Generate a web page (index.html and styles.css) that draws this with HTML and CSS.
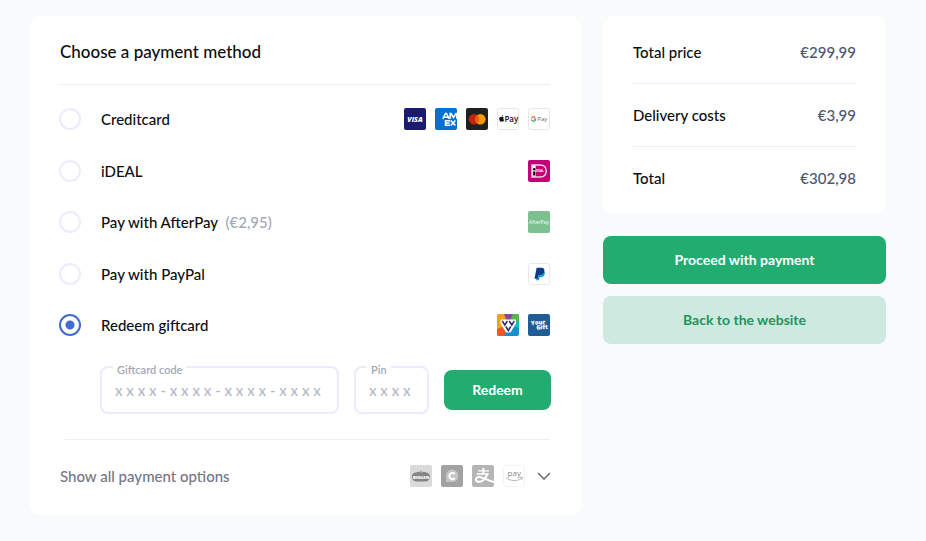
FILE: index.html
```html
<!DOCTYPE html>
<html lang="en">
<head>
<meta charset="utf-8">
<meta name="viewport" content="width=device-width, initial-scale=1">
<title>Choose a payment method</title>
<link rel="stylesheet" href="styles.css">
</head>
<body>
<div class="checkout">
  <main class="card methods">
    <h1 class="title">Choose a payment method</h1>
    <form class="form">
      <div class="options">
        <div class="option">
          <input class="radio" type="radio" name="method" id="creditcard">
          <label class="name" for="creditcard">Creditcard</label>
          <span class="logos">
            <svg class="logo" viewBox="0 0 22 22" role="img" aria-label="Visa"><rect width="22" height="22" rx="2" fill="#1a1a70"/><text x="11" y="13.500" class="t-visa" text-anchor="middle">VISA</text></svg>
            <svg class="logo" viewBox="0 0 22 22" role="img" aria-label="American Express"><rect width="22" height="22" rx="2" fill="#0571cf"/><g fill="none" stroke="#fff" stroke-width="1.500"><path d="M7.800 10.800 10.500 5.500h1l2.700 5.300M9.300 9.200h3.800M15.200 10.800V5.500h.8l2.500 4 2.500-4h.8v5.300"/><path d="M15.200 12.700h-4.700v4.600h4.700M10.500 15h4.200M15.800 12.400l4.600 5M20.400 12.400l-4.600 5"/></g></svg>
            <svg class="logo" viewBox="0 0 22 22" role="img" aria-label="Mastercard"><rect width="22" height="22" rx="2" fill="#20201f"/><circle cx="8" cy="11.200" r="5.200" fill="#c5220f"/><circle cx="14.400" cy="11.200" r="5.200" fill="#f59a0b"/><path d="M11.200 7.100a5.200 5.200 0 0 1 0 8.200 5.200 5.200 0 0 1 0-8.200Z" fill="#ef5a0a"/></svg>
            <svg class="logo" viewBox="0 0 22 22" role="img" aria-label="Apple Pay"><rect x=".5" y=".5" width="21" height="21" rx="2" fill="#fff" stroke="#e6e6e8"/><path d="M4.800 9.200c.9-.5 1.700-.2 2.100.3-.9.7-.8 2 .2 2.500-.4 1.200-1.100 2-1.800 1.600-.4-.2-.7-.2-1.100 0C3.200 14 2.200 12 2.200 10.700c0-1.400 1.300-2 2.600-1.500ZM4.700 8.800c0-.9.5-1.500 1.300-1.700.1.900-.5 1.600-1.300 1.700Z" fill="#111"/><text x="7.400" y="13.600" class="t-apple">Pay</text></svg>
            <svg class="logo" viewBox="0 0 22 22" role="img" aria-label="Google Pay"><rect x=".5" y=".5" width="21" height="21" rx="2" fill="#fff" stroke="#e6e6e8"/><g fill="none" stroke-width="1.200"><path d="M7.200 9.500A2.200 2.200 0 0 0 3.700 9.700" stroke="#ea4335"/><path d="M3.700 9.700a2.200 2.200 0 0 0 0 2.500" stroke="#fbbc04"/><path d="M3.700 12.200A2.200 2.200 0 0 0 6.900 12.700" stroke="#34a853"/><path d="M6.900 12.700A2.200 2.200 0 0 0 7.600 11H5.600" stroke="#4285f4"/></g><text x="9.300" y="13.300" class="t-google">Pay</text></svg>
          </span>
        </div>
        <div class="option">
          <input class="radio" type="radio" name="method" id="ideal">
          <label class="name" for="ideal">iDEAL</label>
          <span class="logos">
            <svg class="logo" viewBox="0 0 22 22" role="img" aria-label="iDEAL"><rect width="22" height="22" rx="2" fill="#c10079"/><path d="M4 5h8c4.300 0 6.200 2.500 6.200 6s-2 6-6.200 6H4Z" fill="#c10079" stroke="#e8dce4" stroke-width="1.400"/><path d="M4.500 5.500h3.200v11H4.500Z" fill="#fff"/><circle cx="6.200" cy="9.300" r="1.200"/><path d="M5.200 11.500h2v4h-2Z"/><path d="M8 7h4c2.800 0 4 1.600 4 4s-1.200 4-4 4H8Z" fill="#c10079"/><text x="8" y="12.100" class="t-ideal">DEAL</text></svg>
          </span>
        </div>
        <div class="option">
          <input class="radio" type="radio" name="method" id="afterpay">
          <label class="name" for="afterpay">Pay with AfterPay <span class="fee">(€2,95)</span></label>
          <span class="logos">
            <svg class="logo" viewBox="0 0 22 22" role="img" aria-label="AfterPay"><rect width="22" height="22" rx="2" fill="#7cc08f"/><text x="11" y="12.800" class="t-after" text-anchor="middle">AfterPay</text></svg>
          </span>
        </div>
        <div class="option">
          <input class="radio" type="radio" name="method" id="paypal">
          <label class="name" for="paypal">Pay with PayPal</label>
          <span class="logos">
            <svg class="logo" viewBox="0 0 22 22" role="img" aria-label="PayPal"><rect x=".5" y=".5" width="21" height="21" rx="2" fill="#fff" stroke="#e9e9eb"/><path d="M9.500 7.500h5c2.200.4 2.800 2 2.200 3.800-.6 2-2 2.900-4.200 2.900h-.9l-.6 3.100H8.200Z" fill="#189bd8"/><path d="M8.600 4.700h4.700c2.500 0 3.500 1.400 3 3.600-.6 2.700-2.200 3.700-4.700 3.700h-1.400l-.7 3.700H6.500Z" fill="#123984"/></svg>
          </span>
        </div>
        <div class="option">
          <input class="radio" type="radio" name="method" id="giftcard" checked>
          <label class="name" for="giftcard">Redeem giftcard</label>
          <span class="logos">
            <svg class="logo" viewBox="0 0 22 22" role="img" aria-label="VVV Giftcard"><defs><clipPath id="vvv"><rect width="22" height="22" rx="2"/></clipPath></defs><g clip-path="url(#vvv)"><path d="M0 0h22v22H0Z" fill="#168fd2"/><path d="M0 0h8l3 11L0 17Z" fill="#f6a116"/><path d="M7 0h10l-6 11Z" fill="#8c469c"/><path d="M16 0h6v7l-11 4Z" fill="#54b746"/><path d="M0 15l11-4-4 11H0Z" fill="#ee5824"/><path d="M22 7v7L11 11Z" fill="#1cb5c4"/></g><path d="M3.500 5.500h15.500v4l-5.500 9h-4.500l-5.500-9Z" fill="#fff"/><g fill="none" stroke="#302a70" stroke-width="1.500"><path d="M5.300 7 7.800 11l2.500-4M12.300 7l2.500 4 2.500-4M8.800 12.500l2.500 4 2.500-4"/></g></svg>
            <svg class="logo" viewBox="0 0 22 22" role="img" aria-label="YourGift"><rect width="22" height="22" rx="2" fill="#205d96"/><text transform="rotate(-5 11 11)" class="t-gift"><tspan x="3" y="10.500">Your</tspan><tspan x="8" y="15.500">Gift</tspan></text></svg>
          </span>
        </div>
      </div>
      <div class="redeem">
        <div class="field field-code">
          <label class="caption" for="code">Giftcard code</label>
          <input class="input" id="code" type="text" placeholder="x x x x - x x x x - x x x x - x x x x">
        </div>
        <div class="field field-pin">
          <label class="caption" for="pin">Pin</label>
          <input class="input" id="pin" type="text" placeholder="x x x x">
        </div>
        <button class="button button-small" type="button">Redeem</button>
      </div>
    </form>
    <button class="more" type="button">
      <span>Show all payment options</span>
      <span class="logos">
        <svg class="logo" viewBox="0 0 22 22" aria-hidden="true"><rect width="22" height="22" rx="2" fill="#dadada"/><path d="M6 7.500c2-1 3.500-.8 4.500.2L10 5.800l1.300.2.300 1.700c1.500-1.200 3-1 4.400-.2 2.200 0 4 1.800 4 4.200s-1.800 4.700-4 4.700H6c-2.400 0-4.200-2.300-4.200-4.700S3.600 7.500 6 7.500Z" fill="#858585"/><text x="11" y="14.300" class="t-small" text-anchor="middle">BENGEN</text></svg>
        <svg class="logo" viewBox="0 0 22 22" aria-hidden="true"><rect width="22" height="22" rx="2" fill="#a2a2a2"/><path d="M5 17V11a6.200 6.200 0 1 1 6.200 6Z" fill="#c6c6c6"/><path d="M13.700 8.900a3.100 3.100 0 1 0 0 4.300" fill="none" stroke="#fff" stroke-width="2"/></svg>
        <svg class="logo" viewBox="0 0 22 22" role="img" aria-label="Alipay"><rect width="22" height="22" rx="2" fill="#b5b5b5"/><g fill="none" stroke="#fff"><path d="M6 5.900h11M4.800 9h12" stroke-width="1.300"/><path d="M11.300 3v6" stroke-width="2"/><path d="M15.300 9c-1 3.500-4.300 7.800-8 7.800-4.600 0-4.200-4.800-.4-4.800 4.200 0 7 3 15.100 5" stroke-width="2"/></g></svg>
        <svg class="logo" viewBox="0 0 22 22" role="img" aria-label="Amazon Pay"><rect x=".5" y=".5" width="21" height="21" rx="2" fill="#fff" stroke="#f3f3f3"/><text x="11.300" y="10.500" class="t-amazon" text-anchor="middle">pay</text><path d="M3 12.800c4.500 3.500 11 3.500 15.500.8M16.700 12.500l2.800-.2-.9 2.600" fill="none" stroke="#b5b5b5"/></svg>
      </span>
      <svg class="chevron" viewBox="0 0 14 8" aria-hidden="true"><path d="M1 1l6 6 6-6" fill="none" stroke="#6b6c7e" stroke-width="1.600"/></svg>
    </button>
  </main>
  <aside class="side">
    <dl class="card summary">
      <div class="line"><dt>Total price</dt><dd>€299,99</dd></div>
      <div class="line"><dt>Delivery costs</dt><dd>€3,99</dd></div>
      <div class="line"><dt>Total</dt><dd>€302,98</dd></div>
    </dl>
    <button class="button" type="button">Proceed with payment</button>
    <button class="button button-soft" type="button">Back to the website</button>
  </aside>
</div>
</body>
</html>
```
FILE: styles.css
```css
* {
  box-sizing: border-box;
}

body {
  margin: 0;
  background: #f9fafc;
  color: #0c0c0e;
  font: 500 15px/22px Lato, "Liberation Sans", sans-serif;
}

button,
input {
  font: inherit;
}

.checkout {
  display: grid;
  grid-template-columns: minmax(0, 1fr) 283px;
  align-items: start;
  gap: 22px;
  padding: 16px 40px 26px 30px;
}

.card {
  background: #fff;
  border-radius: 10px;
}

.methods {
  padding: 0 31px 17px 30px;
}

.title {
  margin: 0;
  padding: 24px 0 20px;
  border-bottom: 1px solid #ededfb;
  font-size: 17px;
  font-weight: 500;
  line-height: 24px;
}

.form {
  padding: 23px 0 25px;
}

.options {
  display: flex;
  flex-direction: column;
  justify-content: space-between;
  min-height: 228px;
}

.option {
  display: flex;
  align-items: center;
}

.radio {
  appearance: none;
  flex: none;
  width: 22px;
  height: 22px;
  margin: 0 20px 0 -1px;
  border: 2px solid #ebebff;
  border-radius: 50%;
  background: #fff;
}

.radio:checked {
  border-color: #426bd4;
  background: radial-gradient(circle, #426bd4 4px, #fff 5px);
}

.name {
  flex: 1;
}

.fee {
  margin-left: 4px;
  color: #a3a8b6;
}

.logos {
  display: flex;
  gap: 9px;
}

.logo {
  display: block;
  width: 22px;
  height: 22px;
}

.redeem {
  display: flex;
  align-items: center;
  gap: 15px;
  margin: 30px -1px 0 40px;
}

.field {
  position: relative;
}

.field-code {
  flex: 1;
}

.field-pin {
  width: 75px;
}

.caption {
  position: absolute;
  top: -4px;
  left: 13px;
  padding: 0 4px;
  background: #fff;
  color: #a3a8b6;
  font-size: 11px;
  font-weight: 600;
  line-height: 16px;
}

.input {
  display: block;
  width: 100%;
  height: 48px;
  padding: 0 13px;
  border: 2px solid #ebebff;
  border-radius: 8px;
  background: #fff;
  color: #0c0c0e;
}

.input::placeholder {
  color: #b3b7c4;
  opacity: 1;
}

.button {
  height: 48px;
  padding: 0 28px;
  border: 0;
  border-radius: 8px;
  background: #23ac70;
  color: #fff;
  font-size: 14px;
  font-weight: 700;
}

.button-small {
  width: 107px;
  height: 40px;
}

.button-soft {
  background: #cee9df;
  color: #1d9460;
}

.more {
  display: flex;
  align-items: center;
  width: 100%;
  padding: 26px 0 11px;
  border: 0;
  background: linear-gradient(#ededfb, #ededfb) 5px 0 / 100% 1px no-repeat;
  color: #747686;
  text-align: left;
}

.more .logos {
  margin-left: auto;
}

.chevron {
  width: 14px;
  height: 8px;
  margin: 0 -1px 0 12px;
}

.side {
  display: flex;
  flex-direction: column;
  gap: 12px;
}

.summary {
  margin: 0 0 10px;
  padding: 5px 30px;
}

.line {
  display: flex;
  justify-content: space-between;
  padding: 20px 0;
}

.line + .line {
  border-top: 1px solid #ededfb;
}

.line dd {
  margin: 0;
  color: #4b566f;
}

.logo text {
  font-family: "Open Sans", sans-serif;
  fill: #fff;
}

.logo .t-visa {
  font-size: 7px;
  font-style: italic;
  font-weight: 800;
}

.logo .t-apple {
  font-size: 8px;
  font-weight: 600;
  fill: #111;
}

.logo .t-google {
  font-size: 6px;
  fill: #66696e;
}

.logo .t-ideal {
  font-size: 3px;
  font-weight: 700;
}

.logo .t-after {
  font-size: 5px;
}

.logo .t-gift {
  font-size: 6px;
  font-weight: 800;
}

.logo .t-small {
  font-size: 4px;
  font-weight: 800;
}

.logo .t-amazon {
  font-size: 8px;
  fill: #888;
}
```
